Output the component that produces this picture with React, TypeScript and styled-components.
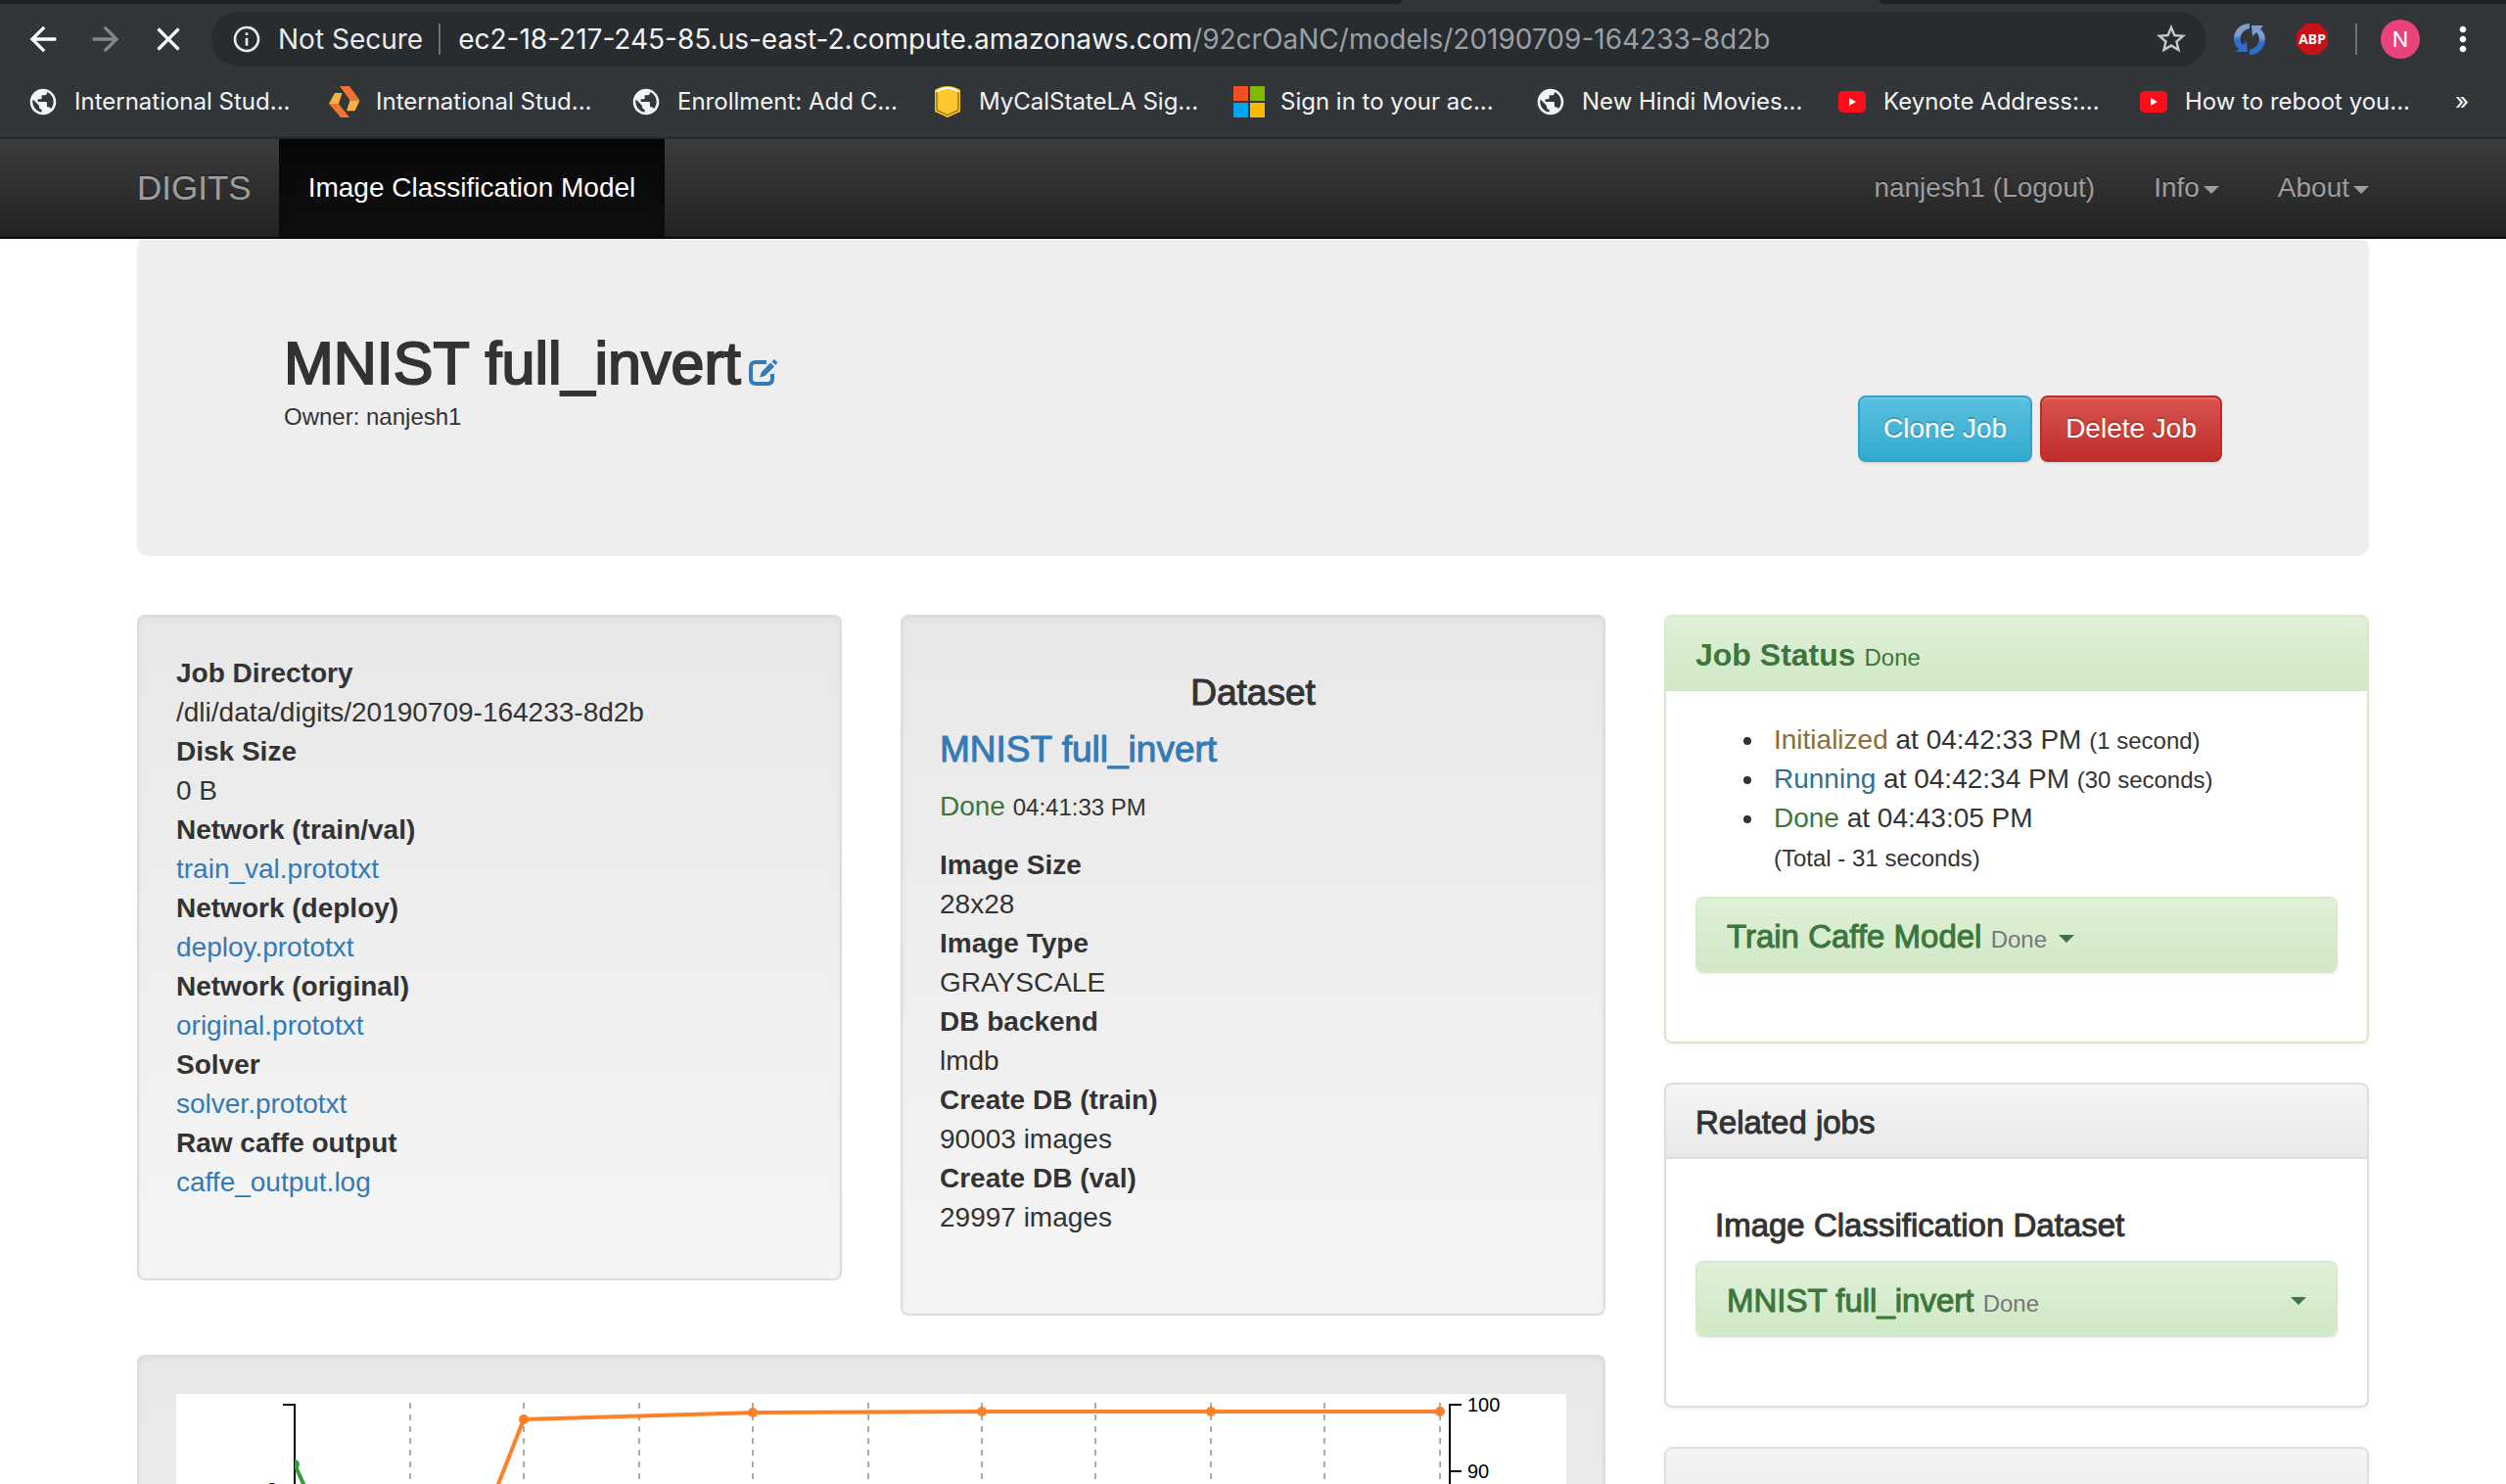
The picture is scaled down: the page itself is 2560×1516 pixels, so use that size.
import React from "react";
import styled, { createGlobalStyle, css } from "styled-components";
import {
  MdArrowBack,
  MdArrowForward,
  MdClose,
  MdInfoOutline,
  MdMoreVert,
  MdPublic,
  MdStarBorder,
} from "react-icons/md";

const GlobalStyle = createGlobalStyle`
  * { box-sizing: border-box; }
  body {
    margin: 0;
    background: #fff;
    color: #333;
    font: 28px/40px "Liberation Sans", Arial, sans-serif;
  }
  h1, h2, h3, h4, p, ul, dl, dd { margin: 0; }
  a { color: #337ab7; text-decoration: none; }
  button { font: inherit; cursor: pointer; }
`;

/* Helvetica's medium weight, heavier than regular and lighter than bold */
const medium = css`
  font-weight: 400;
  -webkit-text-stroke: 1px currentColor;
`;

const Page = styled.div`
  height: 100vh;
  overflow: hidden;
`;

/* ---------- browser frame ---------- */

const Frame = styled.header`
  background: #323639;
  color: #f1f3f4;
  font-family: Inter, Roboto, sans-serif;
  border-bottom: 2px solid #26282a;
`;

const TabStrip = styled.div`
  display: grid;
  grid-template-columns: 1432fr 488fr 640fr;
  height: 4px;
`;

const TabEdge = styled.div<{ $side: "left" | "right" }>`
  background: #202124;
  border-radius: ${(p) => (p.$side === "left" ? "0 0 8px 0" : "0 0 0 8px")};
`;

const Toolbar = styled.div`
  display: flex;
  align-items: center;
  padding: 8px 32px 8px 20px;
`;

const NavButtons = styled.div`
  display: flex;
  gap: 16px;
  margin-right: 20px;
`;

const IconButton = styled.button<{ $w: number; $dim?: boolean }>`
  display: flex;
  align-items: center;
  justify-content: center;
  width: ${(p) => p.$w}px;
  height: 48px;
  padding: 0;
  border: 0;
  background: none;
  color: ${(p) => (p.$dim ? "#85888a" : "#fff")};

  svg { flex: none; }
`;

const AddressBar = styled.div`
  flex: 1;
  display: flex;
  align-items: center;
  height: 56px;
  padding: 0 16px 0 20px;
  border-radius: 28px;
  background: #282c2f;
  white-space: nowrap;
`;

const SecurityNote = styled.span`
  display: flex;
  align-items: center;
  gap: 16px;
  padding-right: 16px;
  border-right: 2px solid #6d7072;
  margin-right: 18px;
  line-height: 32px;
  color: #e8eaed;
`;

const Url = styled.div`
  flex: 1;
  min-width: 0;
  overflow: hidden;
  color: #9aa0a6;
`;

const Host = styled.span`
  color: #f1f3f4;
`;

const Extensions = styled.div`
  display: flex;
  align-items: center;
  gap: 32px;
  margin-left: 28px;
`;

const AdBlock = styled.button`
  width: 32px;
  height: 32px;
  padding: 0;
  border: 0;
  background: #c90f17;
  color: #fff;
  clip-path: polygon(30% 0, 70% 0, 100% 30%, 100% 70%, 70% 100%, 30% 100%, 0 70%, 0 30%);
  font: 700 14px/32px "Noto Sans", sans-serif;
`;

const Divider = styled.span`
  width: 2px;
  height: 32px;
  margin: 0 24px 0 28px;
  background: #6d7072;
`;

const Avatar = styled.button`
  width: 40px;
  height: 40px;
  margin-right: 32px;
  padding: 0;
  border: 0;
  border-radius: 50%;
  background: #ea437c;
  color: #fff;
  font-size: 22px;
  line-height: 40px;
`;

const BookmarkBar = styled.nav`
  display: flex;
  align-items: center;
  height: 64px;
  padding: 0 38px 8px 28px;
  font-size: 24px;
  white-space: nowrap;
`;

const Bookmark = styled.a`
  flex: 0 1 308px;
  display: flex;
  align-items: center;
  gap: 16px;
  && { color: #f1f3f4; }
`;

const Favicon = styled.span`
  flex: none;
  display: flex;
  align-items: center;
  justify-content: center;
  width: 32px;
  height: 32px;
`;

const MoreBookmarks = styled.button`
  margin-left: auto;
  padding: 0;
  border: 0;
  background: none;
  color: #fff;
`;

/* ---------- DIGITS page ---------- */

const Container = styled.div`
  max-width: 2340px;
  margin: 0 auto;
  padding: 0 30px;
`;

const Navbar = styled.nav`
  position: relative;
  z-index: 1;
  background: linear-gradient(#3c3c3c, #222);
  border-bottom: 2px solid #080808;
`;

const NavInner = styled(Container)`
  display: flex;
  line-height: 100px;
`;

const NavLink = styled.a<{ $active?: boolean }>`
  padding: 0 30px;
  text-shadow: 0 -2px 0 rgba(0, 0, 0, 0.25);
  ${(p) =>
    p.$active
      ? css`
          && { color: #fff; }
          background: linear-gradient(#080808, #0f0f0f);
          box-shadow: inset 0 6px 18px rgba(0, 0, 0, 0.25);
        `
      : css`
          && { color: #9d9d9d; }
        `}
`;

const Brand = styled(NavLink)`
  padding: 0 28px 0 0;
  font-size: 35px;
`;

const NavRight = styled.div`
  display: flex;
  margin: 0 -30px 0 auto;
`;

const Caret = styled.span<{ $gap?: number }>`
  display: inline-block;
  margin-left: ${(p) => p.$gap ?? 0}px;
  vertical-align: middle;
  border-top: 8px solid;
  border-left: 8px solid transparent;
  border-right: 8px solid transparent;
`;

const Jumbotron = styled.section`
  display: flex;
  align-items: flex-end;
  justify-content: space-between;
  margin: -2px 0 60px;
  padding: 96px 150px;
  border-radius: 12px;
  background: #eee;
`;

const JobHeading = styled.div`
  padding-bottom: 26px;
`;

const JobTitle = styled.h1`
  font-weight: 400;
  -webkit-text-stroke: 2px currentColor;
  margin-bottom: 2px;
  font-size: 61px;
  line-height: 66px;
`;

const EditLink = styled.a`
  margin-left: 8px;

  svg { vertical-align: -3px; }
`;

const Small = styled.small<{ $tone?: string }>`
  font-size: 24px;
  line-height: 1;
  font-weight: 400;
  -webkit-text-stroke: 0;
  color: ${(p) => p.$tone ?? "inherit"};
`;

const Owner = styled.p`
  font-size: 24px;
`;

const Actions = styled.div`
  display: flex;
  gap: 8px;
`;

const ActionButton = styled.button<{ $from: string; $to: string; $edge: string }>`
  padding: 12px 24px;
  border: 2px solid ${(p) => p.$edge};
  border-radius: 8px;
  background: linear-gradient(${(p) => p.$from}, ${(p) => p.$to});
  box-shadow: inset 0 2px 0 rgba(255, 255, 255, 0.15), 0 2px 2px rgba(0, 0, 0, 0.075);
  color: #fff;
  text-shadow: 0 -2px 0 rgba(0, 0, 0, 0.2);
`;

const Columns = styled.main`
  display: grid;
  grid-template-columns: repeat(3, minmax(0, 1fr));
  gap: 60px;
  align-items: start;
`;

const MainColumn = styled.div`
  grid-column: span 2;
  display: flex;
  flex-direction: column;
  gap: 40px;
`;

const SideColumn = styled.aside`
  display: flex;
  flex-direction: column;
  gap: 40px;
`;

const WellPair = styled.div`
  display: grid;
  grid-template-columns: repeat(2, minmax(0, 1fr));
  gap: 60px;
  align-items: start;
`;

const Well = styled.section`
  padding: 38px;
  border: 2px solid #dcdcdc;
  border-radius: 8px;
  background: linear-gradient(#e8e8e8, #f5f5f5);
  box-shadow: inset 0 2px 6px rgba(0, 0, 0, 0.05);
`;

const Details = styled.dl`
  margin-bottom: 40px;
`;

const Term = styled.dt`
  font-weight: 700;
`;

const WellTitle = styled.h3`
  ${medium}
  margin: 20px 0 18px;
  font-size: 37px;
  text-align: center;
`;

const DatasetName = styled.h4`
  ${medium}
  margin-bottom: 18px;
  font-size: 37px;
`;

const DatasetStatus = styled.p`
  margin-bottom: 20px;
`;

const Tone = styled.span<{ $tone: string }>`
  color: ${(p) => p.$tone};
`;

const Panel = styled.section<{ $success?: boolean }>`
  border: 2px solid ${(p) => (p.$success ? "#d6e9c6" : "#ddd")};
  border-radius: 8px;
  background: #fff;
  box-shadow: 0 2px 4px rgba(0, 0, 0, 0.05);
  overflow: hidden;
`;

/* $line is the rule under the heading of a panel that has a body */
const PanelHead = styled.div<{ $success?: boolean; $line?: boolean }>`
  display: flex;
  align-items: center;
  padding: 22px 30px 18px;
  background: ${(p) =>
    p.$success ? "linear-gradient(#dff0d8, #d0e9c6)" : "linear-gradient(#f5f5f5, #e8e8e8)"};
  color: ${(p) => (p.$success ? "#3c763d" : "#333")};
  border-bottom: ${(p) => (p.$line ? `2px solid ${p.$success ? "#d0e9c6" : "#ddd"}` : "0")};
`;

const PanelTitle = styled.h3<{ $bold?: boolean }>`
  ${medium}
  ${(p) => p.$bold && "font-weight: 700; -webkit-text-stroke: 0;"}
  flex: 1;
  font-size: ${(p) => (p.$bold ? 32 : 33)}px;
  line-height: 34px;
`;

const PanelBody = styled.div`
  padding: 30px 30px 70px;
`;

const StatusList = styled.ul`
  margin-bottom: 20px;
  padding-left: 72px;

  li { padding-left: 8px; }
`;

const GroupTitle = styled.h4`
  ${medium}
  margin: 20px 20px 18px;
  font-size: 33px;
  line-height: 36px;
`;

const ChartBox = styled.div`
  background: #fff;
`;

const ChartSvg = styled.svg`
  display: block;
  width: 100%;
  font: 20px "Liberation Sans", Arial, sans-serif;
`;

/* ---------- icons ---------- */

const OrangeMark = () => (
  <svg width="32" height="32" viewBox="0 0 32 32">
    <path d="M11 0H21L31.500 14.500H21.500Z" fill="#ef7430" />
    <path d="M6 7H13.500L10 18H0Z" fill="#fbb040" />
    <path d="M21.500 14.500H31.500L26.500 25.300H18Z" fill="#fbb040" />
    <path d="M0 18H10L21 32H12Z" fill="#ef7430" />
  </svg>
);

const Shield = () => (
  <svg width="32" height="32" viewBox="0 0 32 32">
    <path d="M3 4 Q9 0 16 0 Q23 0 29 4 V26 L16 32 L3 26Z" fill="#fcc62c" />
    <path d="M5 6 Q10 2 16 2 Q22 2 27 6" fill="none" stroke="#fff" strokeWidth="2" />
    <path d="M5 6 V24.500 L16 29.500 L27 24.500 V6" fill="none" stroke="#6b5310" strokeWidth="1" />
  </svg>
);

const WindowsMark = () => (
  <svg width="32" height="32" viewBox="0 0 32 32">
    <path d="M0 0H15V15H0Z" fill="#f25022" />
    <path d="M17 0H32V15H17Z" fill="#7fba00" />
    <path d="M0 17H15V32H0Z" fill="#00a4ef" />
    <path d="M17 17H32V32H17Z" fill="#ffb900" />
  </svg>
);

const PlayMark = () => (
  <svg width="28" height="22" viewBox="0 0 28 22">
    <rect width="28" height="22" rx="5" fill="#ff0d1a" />
    <path d="M11 7 L18 11 L11 15Z" fill="#fff" />
  </svg>
);

const SyncMark = () => (
  <svg width="32" height="32" viewBox="0 0 32 32">
    <defs>
      <linearGradient id="sync" x1="0" y1="0" x2="0" y2="1">
        <stop offset="0.4" stopColor="#7c9fd0" />
        <stop offset="0.6" stopColor="#2f6ccb" />
      </linearGradient>
    </defs>
    <g fill="url(#sync)">
      <path d="M16 0 C6 0 0 8 0 16 C0 20 2 24 5 26 L2 29 L14 29 L13 18 L9 22 C5 18 5 8 16 5Z" />
      <path d="M16 32 C26 32 32 24 32 16 C32 12 30 8 27 6 L30 2 L18 2 L19 13 L23 9 C28 14 27 24 16 27Z" />
    </g>
  </svg>
);

const EditMark = () => (
  <svg width="30" height="28" viewBox="0 0 30 28" aria-hidden="true">
    <path
      d="M18 3 H7 Q2 3 2 8 V20 Q2 25 7 25 H19 Q24 25 24 20 V15"
      fill="none"
      stroke="#337ab7"
      strokeWidth="4"
    />
    <path d="M11 18.500 L13 13 L22 3.500 L26 7.500 L16.500 17Z" fill="#337ab7" />
    <path d="M23.500 2.500 L26 0 L29.500 3.500 L27.200 6Z" fill="#337ab7" />
  </svg>
);

/* ---------- data ---------- */

const bookmarks = [
  { label: "International Stud...", icon: <MdPublic size={34} /> },
  { label: "International Stud...", icon: <OrangeMark /> },
  { label: "Enrollment: Add C...", icon: <MdPublic size={34} /> },
  { label: "MyCalStateLA Sig...", icon: <Shield /> },
  { label: "Sign in to your ac...", icon: <WindowsMark /> },
  { label: "New Hindi Movies...", icon: <MdPublic size={34} /> },
  { label: "Keynote Address:...", icon: <PlayMark /> },
  { label: "How to reboot you...", icon: <PlayMark /> },
];

type Row = { term: string; value: string; link?: boolean };

const jobDetails: Row[] = [
  { term: "Job Directory", value: "/dli/data/digits/20190709-164233-8d2b" },
  { term: "Disk Size", value: "0 B" },
  { term: "Network (train/val)", value: "train_val.prototxt", link: true },
  { term: "Network (deploy)", value: "deploy.prototxt", link: true },
  { term: "Network (original)", value: "original.prototxt", link: true },
  { term: "Solver", value: "solver.prototxt", link: true },
  { term: "Raw caffe output", value: "caffe_output.log", link: true },
];

const datasetDetails: Row[] = [
  { term: "Image Size", value: "28x28" },
  { term: "Image Type", value: "GRAYSCALE" },
  { term: "DB backend", value: "lmdb" },
  { term: "Create DB (train)", value: "90003 images" },
  { term: "Create DB (val)", value: "29997 images" },
];

const gridX = [239, 355, 473, 589, 707, 823, 939, 1057, 1173, 1291];
const accuracy = [
  [355, 26],
  [589, 19],
  [823, 18],
  [1057, 18],
  [1291, 18],
];
const accuracyLine = [[145, 560], ...accuracy].map((p) => p.join(",")).join(" ");

const DetailList = ({ rows }: { rows: Row[] }) => (
  <Details>
    {rows.map((r) => (
      <React.Fragment key={r.term}>
        <Term>{r.term}</Term>
        <dd>{r.link ? <a href="#file">{r.value}</a> : r.value}</dd>
      </React.Fragment>
    ))}
  </Details>
);

const Chart = () => (
  <ChartBox>
    <ChartSvg viewBox="0 0 1420 560" role="img" aria-label="Training accuracy and loss">
      <clipPath id="plot">
        <rect x="121" y="0" width="1180" height="560" />
      </clipPath>
      {gridX.map((x) => (
        <line key={x} x1={x} x2={x} y1="9" y2="500" stroke="#aaa" strokeWidth="2" strokeDasharray="6 6" />
      ))}
      <path d="M109 11H121V500" fill="none" stroke="#000" strokeWidth="2" />
      <path d="M1313 11H1301V500M1301 79H1313" fill="none" stroke="#000" strokeWidth="2" />
      <text x="1319" y="18">100</text>
      <text x="1319" y="86">90</text>
      <text x="103" y="105" textAnchor="end">2</text>
      <g clipPath="url(#plot)">
        <path d="M121 72 L130 92 L238 470" fill="none" stroke="#2ca037" strokeWidth="4" />
        <circle cx="121" cy="72" r="5" fill="#2ca037" />
        <polyline points={accuracyLine} fill="none" stroke="#ff7f27" strokeWidth="4" />
      </g>
      {accuracy.map(([x, y]) => (
        <circle key={x} cx={x} cy={y} r="5" fill="#ff7f27" />
      ))}
    </ChartSvg>
  </ChartBox>
);

export default function App() {
  return (
    <Page>
      <GlobalStyle />
      <Frame>
        <TabStrip>
          <TabEdge $side="left" />
          <span />
          <TabEdge $side="right" />
        </TabStrip>
        <Toolbar>
          <NavButtons>
            <IconButton $w={48} aria-label="Back"><MdArrowBack size={40} /></IconButton>
            <IconButton $w={48} $dim aria-label="Forward"><MdArrowForward size={40} /></IconButton>
            <IconButton $w={48} aria-label="Stop"><MdClose size={40} /></IconButton>
          </NavButtons>
          <AddressBar>
            <SecurityNote>
              <MdInfoOutline size={32} />
              Not Secure
            </SecurityNote>
            <Url>
              <Host>ec2-18-217-245-85.us-east-2.compute.amazonaws.com</Host>
              /92crOaNC/models/20190709-164233-8d2b
            </Url>
            <IconButton $w={40} aria-label="Bookmark this page"><MdStarBorder size={36} color="#c6c9cc" /></IconButton>
          </AddressBar>
          <Extensions>
            <IconButton $w={32} aria-label="Sync"><SyncMark /></IconButton>
            <AdBlock>ABP</AdBlock>
          </Extensions>
          <Divider />
          <Avatar>N</Avatar>
          <IconButton $w={24} aria-label="Menu"><MdMoreVert size={40} /></IconButton>
        </Toolbar>
        <BookmarkBar>
          {bookmarks.map((b, i) => (
            <Bookmark key={i} href="#bookmark">
              <Favicon>{b.icon}</Favicon>
              {b.label}
            </Bookmark>
          ))}
          <MoreBookmarks>»</MoreBookmarks>
        </BookmarkBar>
      </Frame>

      <Navbar>
        <NavInner>
          <Brand href="#home">DIGITS</Brand>
          <NavLink href="#model" $active>Image Classification Model</NavLink>
          <NavRight>
            <NavLink href="#logout">nanjesh1 (Logout)</NavLink>
            <NavLink href="#info">Info<Caret $gap={4} /></NavLink>
            <NavLink href="#about">About<Caret $gap={4} /></NavLink>
          </NavRight>
        </NavInner>
      </Navbar>

      <Container>
        <Jumbotron>
          <JobHeading>
            <JobTitle>
              MNIST full_invert
              <EditLink href="#edit" aria-label="Edit name"><EditMark /></EditLink>
            </JobTitle>
            <Owner>Owner: nanjesh1</Owner>
          </JobHeading>
          <Actions>
            <ActionButton $from="#5bc0de" $to="#31abd1" $edge="#2fa3c9">Clone Job</ActionButton>
            <ActionButton $from="#d9534f" $to="#c12e2a" $edge="#b92c28">Delete Job</ActionButton>
          </Actions>
        </Jumbotron>

        <Columns>
          <MainColumn>
            <WellPair>
              <Well>
                <DetailList rows={jobDetails} />
              </Well>
              <Well>
                <WellTitle>Dataset</WellTitle>
                <DatasetName><a href="#dataset">MNIST full_invert</a></DatasetName>
                <DatasetStatus>
                  <Tone $tone="#3c763d">Done</Tone> <Small>04:41:33 PM</Small>
                </DatasetStatus>
                <DetailList rows={datasetDetails} />
              </Well>
            </WellPair>
            <Well>
              <Chart />
            </Well>
          </MainColumn>

          <SideColumn>
            <Panel $success>
              <PanelHead $success $line>
                <PanelTitle $bold>Job Status <Small>Done</Small></PanelTitle>
              </PanelHead>
              <PanelBody>
                <StatusList>
                  <li><Tone $tone="#8a6d3b">Initialized</Tone> at 04:42:33 PM <Small>(1 second)</Small></li>
                  <li><Tone $tone="#31708f">Running</Tone> at 04:42:34 PM <Small>(30 seconds)</Small></li>
                  <li>
                    <Tone $tone="#3c763d">Done</Tone> at 04:43:05 PM
                    <br />
                    <Small>(Total - 31 seconds)</Small>
                  </li>
                </StatusList>
                <Panel $success>
                  <PanelHead $success>
                    <PanelTitle>
                      Train Caffe Model <Small $tone="#777">Done</Small>
                      <Caret $gap={12} />
                    </PanelTitle>
                  </PanelHead>
                </Panel>
              </PanelBody>
            </Panel>

            <Panel>
              <PanelHead $line>
                <PanelTitle>Related jobs</PanelTitle>
              </PanelHead>
              <PanelBody>
                <GroupTitle>Image Classification Dataset</GroupTitle>
                <Panel $success>
                  <PanelHead $success>
                    <PanelTitle>
                      MNIST full_invert <Small $tone="#777">Done</Small>
                    </PanelTitle>
                    <Caret />
                  </PanelHead>
                </Panel>
              </PanelBody>
            </Panel>

            <Panel>
              <PanelHead $line>
                <PanelTitle>&nbsp;</PanelTitle>
              </PanelHead>
              <PanelBody />
            </Panel>
          </SideColumn>
        </Columns>
      </Container>
    </Page>
  );
}
